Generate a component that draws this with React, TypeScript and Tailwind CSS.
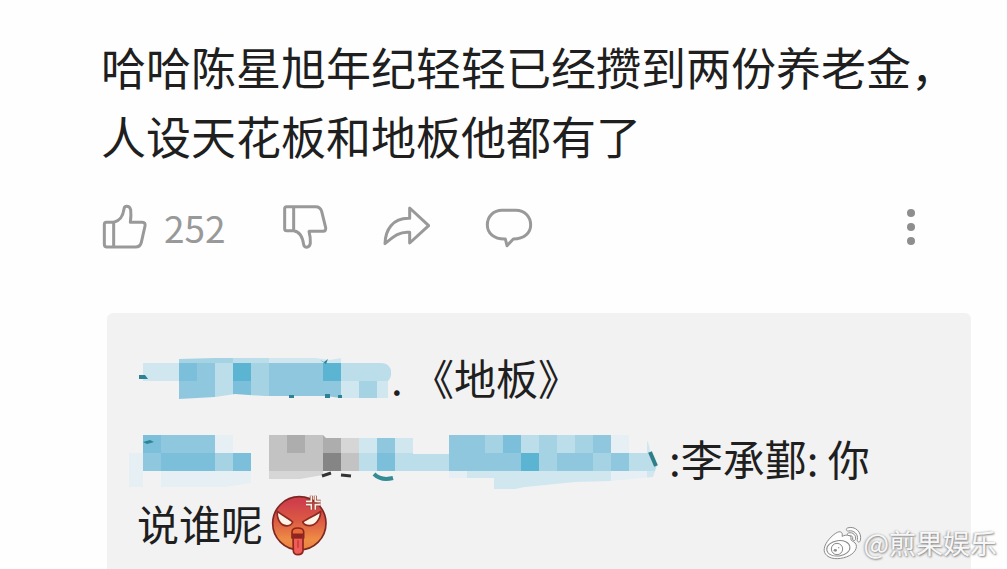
import React from "react";

interface MosaicProps {
  id: string;
  width: number;
  height: number;
  rows: string[];
  outline: string;
  className?: string;
  children?: React.ReactNode;
}

const CELL = 18;

// one letter per cell, "." leaves the cell empty
const SHADES: Record<string, string> = {
  a: "#e6eff4",
  b: "#d0e7ef",
  c: "#bcdeea",
  d: "#a5d3e4",
  e: "#8fc8de",
  f: "#7bbfda",
  g: "#5bb4d2",
  p: "#d6d6d6",
  q: "#c3c3c3",
  r: "#adadad",
  s: "#858585",
};

const NAME_ROWS = [
  ".bbdddccbbbbbaa",
  ".bbfecgdeeegccc",
  ".bbeecfdeeeebdb",
];

const REPLY_ROWS = [
  ".feeea..qrqrpbeb..eedfcdcdea.b.",
  "aefffdf.qqqsqcfccceeeegdeedeccc",
  "a.aaaaa.pppp....aaabbbbbbbbaab.",
];

function Mosaic({ id, width, height, rows, outline, className, children }: MosaicProps) {
  return (
    <svg
      width={width}
      height={height}
      viewBox={`0 0 ${width} ${height}`}
      className={`shrink-0 ${className ?? ""}`}
      aria-hidden="true"
    >
      <clipPath id={id}>
        <path d={outline} />
      </clipPath>
      <g clipPath={`url(#${id})`} shapeRendering="crispEdges">
        {rows.map((row, y) =>
          row.split("").map((shade, x) =>
            shade === "." ? null : (
              <rect
                key={`${x}-${y}`}
                x={x * CELL}
                y={y * CELL}
                width={CELL}
                height={CELL}
                fill={SHADES[shade]}
              />
            )
          )
        )}
      </g>
      {children}
    </svg>
  );
}

interface ActionIconProps {
  viewBox: string;
  children: React.ReactNode;
}

function ActionIcon({ viewBox, children }: ActionIconProps) {
  return (
    <svg
      viewBox={viewBox}
      className="h-12 w-12"
      fill="none"
      stroke="currentColor"
      strokeWidth={9}
      strokeLinejoin="round"
      strokeLinecap="round"
      aria-hidden="true"
    >
      {children}
    </svg>
  );
}

function AngryFace() {
  return (
    <svg viewBox="426 24 174 189" className="ml-2 h-[63px] w-[58px]" role="img" aria-label="怒">
      <defs>
        <linearGradient id="face" x1="0" y1="0" x2="0" y2="1">
          <stop offset="0.1" stopColor="#cf3f4b" />
          <stop offset="0.45" stopColor="#db5a43" />
          <stop offset="0.8" stopColor="#ee8c45" />
          <stop offset="1" stopColor="#e8823f" />
        </linearGradient>
      </defs>
      <circle cx="511" cy="115" r="80" fill="url(#face)" stroke="#7d2722" strokeWidth="5" />
      <path
        d="M445 79C460 91 478 99 491 111C485 126 464 126 454 113C446 103 444 91 445 79Z"
        fill="#fff5e6"
        stroke="#8c2922"
        strokeWidth="5"
        strokeLinejoin="round"
      />
      <path
        d="M575 79C560 91 539 98 521 111C529 126 552 125 563 112C572 102 575 91 575 79Z"
        fill="#fff5e6"
        stroke="#8c2922"
        strokeWidth="5"
        strokeLinejoin="round"
      />
      <path
        d="M489 158V141Q489 129 506 129Q524 129 524 141V158Z"
        fill="#e96a36"
        stroke="#8f241e"
        strokeWidth="5"
      />
      <path
        d="M492 148H522V198Q520 209 507 209Q494 209 493 198Z"
        fill="#ee5d57"
        stroke="#8f241e"
        strokeWidth="5"
      />
      <path d="M494 147H520V161H494Z" fill="#8d241e" />
      <path d="M507 166V188" stroke="#c33732" strokeWidth="4" />
      <path
        d="M547 32V49H531M559 32V49H575M547 74V59H531M559 74V59H575"
        fill="none"
        stroke="#8c3029"
        strokeWidth="9"
      />
      <path
        d="M547 32V49H531M559 32V49H575M547 74V59H531M559 74V59H575"
        fill="none"
        stroke="#fff1e2"
        strokeWidth="5"
      />
    </svg>
  );
}

function Watermark() {
  return (
    <div className="absolute right-[10px] bottom-[8px] flex items-center">
      <svg viewBox="69 75 123 108" className="h-9 w-[41px]" aria-hidden="true">
        <g stroke="#8b8b8b" strokeWidth="3" strokeLinejoin="round" fill="#fdfdfd">
          <path d="M76 145C78 128 99 105 115 97C127 92 132 99 129 109C143 103 157 103 156 117C155 121 158 122 163 125C180 134 172 156 151 167C129 178 99 180 84 167C77 161 74 153 76 145Z" />
          <ellipse cx="118" cy="145" rx="35" ry="23" transform="rotate(-8 118 145)" />
          <circle cx="114" cy="147" r="17" />
          <path d="M145 84C168 76 190 97 184 121C183 129 173 127 175 119C179 103 164 89 148 93C142 94 140 87 145 84Z" />
          <path d="M148 99C162 95 173 107 169 119C167 124 160 122 161 117C163 110 157 105 150 107C145 107 143 101 148 99Z" />
        </g>
        <ellipse cx="109" cy="151" rx="5" ry="4" fill="#8b8b8b" />
        <circle cx="119" cy="143" r="2" fill="#8b8b8b" />
      </svg>
      <span className="text-[27px] leading-9 text-[#f7f7f7] [text-shadow:1px_1px_2px_#888,-1px_0px_2px_#aaa]">
        @煎果娱乐
      </span>
    </div>
  );
}

export default function App() {
  return (
    <main
      lang="zh-CN"
      className="relative bg-[#fefefe] pt-8 pr-9 pl-[101px] text-[#1f1f1f] font-['Noto_Sans_CJK_SC',sans-serif]"
    >
      <p className="text-[45px] leading-[69px]">
        哈哈陈星旭年纪轻轻已经攒到两份养老金，人设天花板和地板他都有了
      </p>

      <div className="mt-[33px] ml-px flex items-center text-[#999]">
        <button type="button" aria-label="赞" className="flex items-center gap-[14px]">
          <ActionIcon viewBox="36 24 144 144">
            <path d="M71 82H49Q43 82 43 88V148Q43 156 51 156H136Q151 156 154 142L165 93Q167 82 157 82H121Q124 60 122 44Q119 34 110 34Q103 34 102 42C99 63 92 76 71 82ZM71 82V156" />
          </ActionIcon>
          <span className="text-[37px] leading-[46px]">252</span>
        </button>
        <button type="button" aria-label="踩" className="ml-[55px]">
          <ActionIcon viewBox="573 24 144 144">
            <path d="M611 35H590Q584 35 584 41V101Q584 107 590 107H611C631 110 638 126 641 149Q643 157 650 157Q659 156 661 145Q662 127 657 109H699Q709 108 707 98L695 49Q691 35 677 35ZM611 35V107" />
          </ActionIcon>
        </button>
        <button type="button" aria-label="转发" className="ml-[53px]">
          <ActionIcon viewBox="156 24 144 144">
            <path d="M239 39L296 92L239 144V112C205 108 185 130 165 146C166 106 187 68 239 70Z" />
          </ActionIcon>
        </button>
        <button type="button" aria-label="评论" className="ml-[55px]">
          <ActionIcon viewBox="465 24 144 144">
            <path d="M516 46H557C586 46 602 67 602 90C602 113 583 132 550 132L531 152L526 132C491 133 472 114 472 90C472 64 491 46 516 46Z" />
          </ActionIcon>
        </button>
        <button type="button" aria-label="更多" className="mr-9 ml-auto">
          <svg viewBox="0 0 48 48" className="h-12 w-12" fill="#8e8e8e" aria-hidden="true">
            <circle cx="24" cy="10" r="4" />
            <circle cx="24" cy="24" r="4" />
            <circle cx="24" cy="38" r="4" />
          </svg>
        </button>
      </div>

      <section className="mt-[62px] ml-[6px] rounded-t-md bg-[#f2f2f2] pt-8 pb-[13px] pl-[30px] text-[42px]">
        <div className="flex items-start">
          <Mosaic
            id="name"
            className="-ml-3"
            width={266}
            height={72}
            rows={NAME_ROWS}
            outline="M18 18H54V14L90 13H190L205 15L216 13V18H256C267 18 269 30 263 36V53H216L200 51H140L110 49L90 52L54 54V36H18Z"
          >
            <path d="M14 30H20L23 34H14ZM195 15L199 17L203 14L201 19ZM164 50H169V53H164ZM200 49H205V53H200ZM213 50H217V53H213Z" fill="#2c8294" />
          </Mosaic>
          <span className="leading-[64px] whitespace-pre">. 《地板》</span>
        </div>

        <div className="mt-[18px] flex items-start">
          <Mosaic
            id="reply"
            className="-ml-3"
            width={544}
            height={54}
            rows={REPLY_ROWS}
            outline="M4 12H18V0H198L201 3H288V19H324V0H514Q525 3 525 18L532 30L528 42L485 46L450 47L400 52L390 54H369V43H324V36H198V40L175 44H144V36H126V48L100 52H4Z"
          >
            <path d="M18 7L25 5L29 7L22 9Z" fill="#2e8592" />
            <path d="M197 41L206 38M216 40L226 41" stroke="#333" strokeWidth="3" />
            <path d="M249 39Q256 46 268 43" fill="none" stroke="#348b93" strokeWidth="4" />
            <path d="M525 17L531 31" stroke="#2f7f89" strokeWidth="4" />
          </Mosaic>
          <span className="leading-[46px] whitespace-nowrap">:李承鄞: 你</span>
        </div>

        <div className="mt-1 flex items-start">
          <span className="leading-[60px]">说谁呢</span>
          <AngryFace />
        </div>
      </section>

      <Watermark />
    </main>
  );
}
